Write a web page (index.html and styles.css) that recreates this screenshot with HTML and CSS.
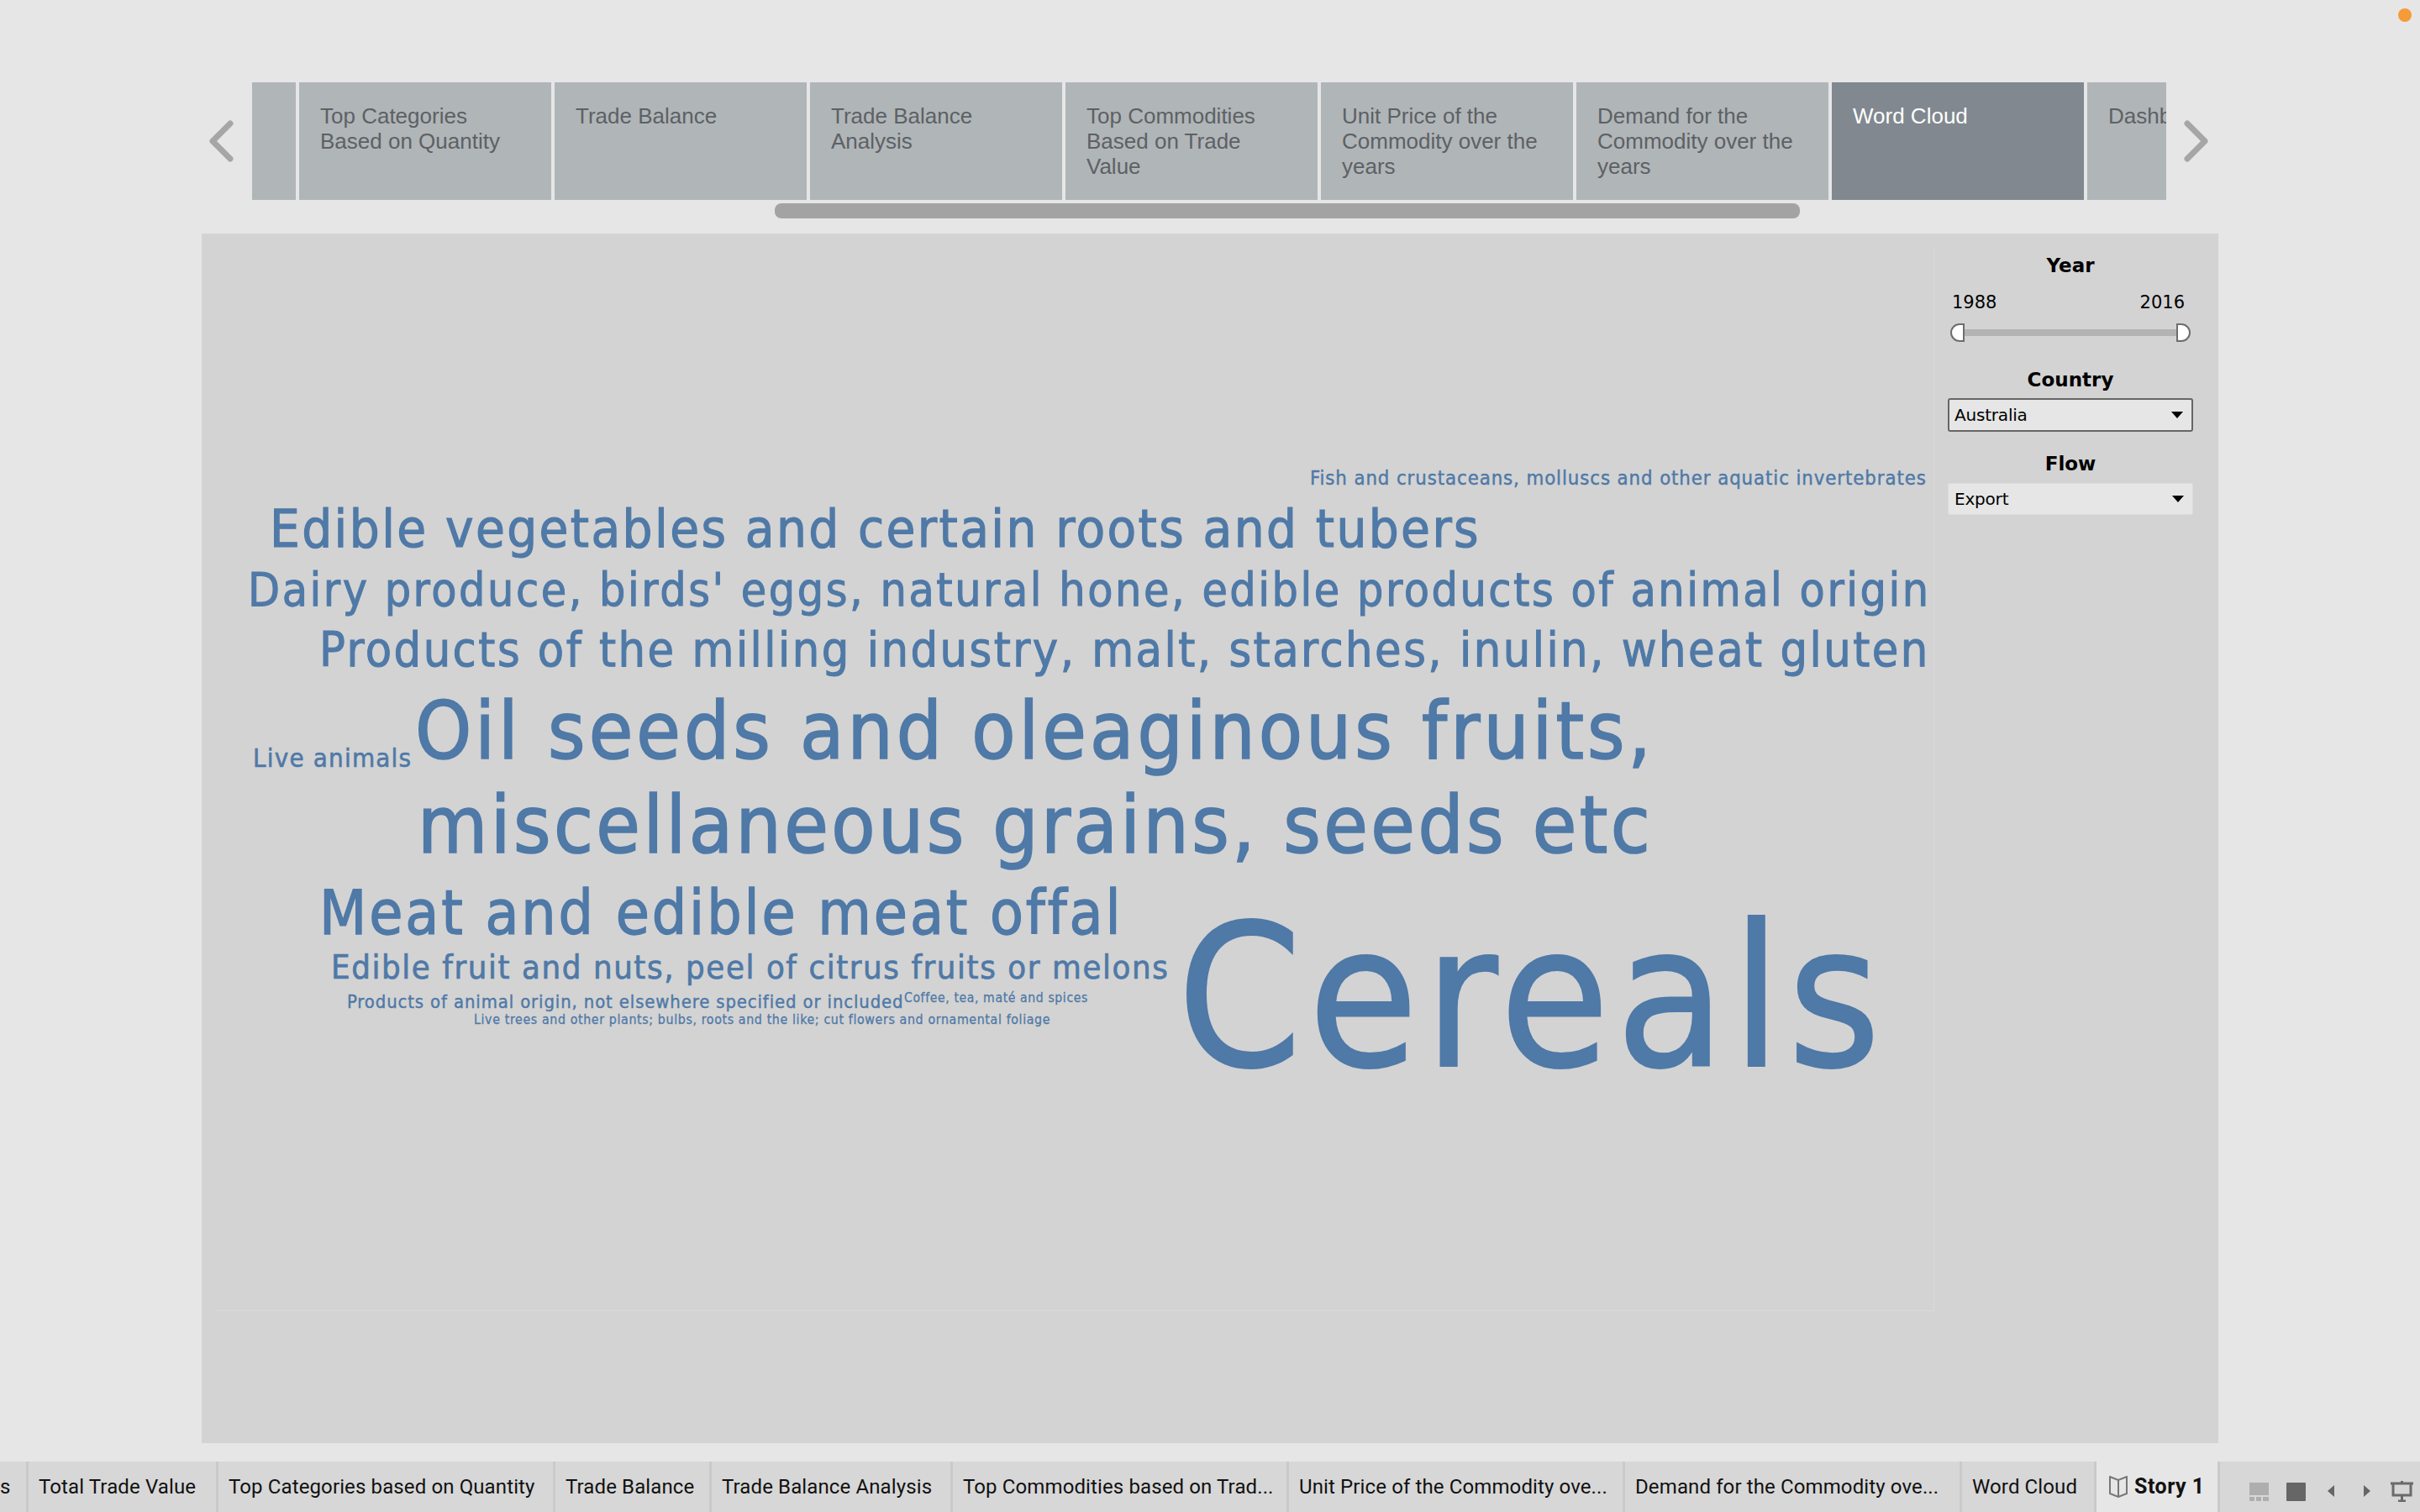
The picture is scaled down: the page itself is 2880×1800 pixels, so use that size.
FILE: index.html
```html
<!DOCTYPE html>
<html lang="en">
<head>
    <meta charset="UTF-8">
    <title>Word Cloud - Story 1</title>
    <link rel="stylesheet" href="styles.css">
</head>
<body>

    <span class="status-dot"></span>

    <!-- Story navigator -->
    <div class="story-nav">
        <svg class="nav-arrow" width="30" height="50" viewBox="0 0 30 50"><path d="M26 4 L5 25 L26 46" /></svg>
        <div class="story-points">
            <div class="point point-stub"></div>
            <div class="point">Top Categories Based on Quantity</div>
            <div class="point">Trade Balance</div>
            <div class="point">Trade Balance Analysis</div>
            <div class="point">Top Commodities Based on Trade Value</div>
            <div class="point">Unit Price of the Commodity over the years</div>
            <div class="point">Demand for the Commodity over the years</div>
            <div class="point point-active">Word Cloud</div>
            <div class="point point-cut">Dashboard</div>
        </div>
        <svg class="nav-arrow" width="30" height="50" viewBox="0 0 30 50"><path d="M4 4 L25 25 L4 46" /></svg>
    </div>
    <div class="scroll-track"><div class="scroll-thumb"></div></div>

    <!-- Dashboard panel -->
    <div class="panel">
        <div class="cloud">
            <span class="word w-fish">Fish and crustaceans, molluscs and other aquatic invertebrates</span>
            <span class="word w-veg">Edible vegetables and certain roots and tubers</span>
            <span class="word w-dairy">Dairy produce, birds' eggs, natural hone, edible products of animal origin</span>
            <span class="word w-milling">Products of the milling industry, malt, starches, inulin, wheat gluten</span>
            <span class="word w-live">Live animals</span>
            <span class="word w-oil">Oil seeds and oleaginous fruits,</span>
            <span class="word w-misc">miscellaneous grains, seeds etc</span>
            <span class="word w-meat">Meat and edible meat offal</span>
            <span class="word w-fruit">Edible fruit and nuts, peel of citrus fruits or melons</span>
            <span class="word w-origin">Products of animal origin, not elsewhere specified or included</span>
            <span class="word w-coffee">Coffee, tea, maté and spices</span>
            <span class="word w-trees">Live trees and other plants; bulbs, roots and the like; cut flowers and ornamental foliage</span>
            <span class="word w-cereals">Cereals</span>
        </div>
        <div class="filters">
            <div class="filter-title">Year</div>
            <div class="year-range"><span>1988</span><span>2016</span></div>
            <div class="slider">
                <span class="handle handle-left"></span>
                <span class="slider-track"></span>
                <span class="handle handle-right"></span>
            </div>
            <div class="filter-title title-country">Country</div>
            <div class="select select-focus">Australia<span class="caret"></span></div>
            <div class="filter-title title-flow">Flow</div>
            <div class="select">Export<span class="caret"></span></div>
        </div>
    </div>

    <!-- Sheet tabs -->
    <div class="sheet-bar">
        <div class="sheet sheet-cut">s</div>
        <div class="sheet">Total Trade Value</div>
        <div class="sheet">Top Categories based on Quantity</div>
        <div class="sheet">Trade Balance</div>
        <div class="sheet">Trade Balance Analysis</div>
        <div class="sheet">Top Commodities based on Trad...</div>
        <div class="sheet">Unit Price of the Commodity ove...</div>
        <div class="sheet">Demand for the Commodity ove...</div>
        <div class="sheet">Word Cloud</div>
        <div class="sheet sheet-active">
            <svg width="22" height="26" viewBox="0 0 22 26"><path d="M11 5 L1 1 V21 L11 25 L21 21 V1 Z M11 5 V25" /></svg>
            Story 1
        </div>
        <div class="sheet-tools">
            <svg class="tool tool-grid" width="23" height="22" viewBox="0 0 23 22"><rect width="23" height="15" /><rect y="17" width="6" height="5" /><rect x="8" y="17" width="6" height="5" /><rect x="16" y="17" width="7" height="5" /></svg>
            <svg class="tool tool-dark" width="23" height="22" viewBox="0 0 23 22"><rect width="23" height="22" rx="1" /></svg>
            <svg class="tool tool-dark tool-prev" width="8" height="14" viewBox="0 0 8 14"><path d="M8 0 V14 L0 7 Z" /></svg>
            <svg class="tool tool-dark tool-next" width="8" height="14" viewBox="0 0 8 14"><path d="M0 0 V14 L8 7 Z" /></svg>
            <svg class="tool-screen" width="27" height="25" viewBox="0 0 27 25"><path d="M0 3 H27 M3 3 V17 H24 V3 M13.5 0 V3 M13.5 17 V24 M9 24 H18" /></svg>
        </div>
    </div>

</body>
</html>
```
FILE: styles.css
```css
html, body {
    margin: 0;
    height: 100%;
}
body {
    width: 2880px;
    height: 1800px;
    overflow: hidden;
    position: relative;
    background-color: #e6e6e6;
    display: flex;
    flex-direction: column;
    font-family: "DejaVu Sans", sans-serif;
}
.status-dot {
    position: absolute;
    top: 10px;
    right: 10px;
    width: 16px;
    height: 16px;
    border-radius: 50%;
    background-color: #f59b38;
}

/* story navigator */
.story-nav {
    display: flex;
    align-items: center;
    margin: 98px 0 0 248px;
    height: 140px;
}
.nav-arrow {
    flex: none;
    fill: none;
    stroke: #a6a6a6;
    stroke-width: 7;
    stroke-linecap: round;
    stroke-linejoin: round;
}
.story-points {
    display: flex;
    gap: 4px;
    width: 2278px;
    height: 140px;
    margin: 0 21px 0 22px;
    overflow: hidden;
    font-family: "Liberation Sans", Arial, sans-serif;
    font-size: 26px;
    line-height: 30px;
    color: #5d6164;
}
.point {
    flex: none;
    box-sizing: border-box;
    width: 300px;
    padding: 25px 24px 0 25px;
    background-color: #b0b5b8;
}
.point-stub {
    width: 52px;
    padding: 0;
}
.point-active {
    background-color: #81888f;
    color: #fff;
}
.point-cut {
    width: 94px;
    padding-right: 0;
    white-space: nowrap;
    overflow: hidden;
}
.scroll-track {
    height: 18px;
    margin: 4px 0 18px;
}
.scroll-thumb {
    width: 1220px;
    height: 18px;
    margin-left: 922px;
    border-radius: 8px;
    background-color: #a3a3a3;
}

/* panel */
.panel {
    display: flex;
    width: 2400px;
    height: 1440px;
    margin-left: 240px;
    background-color: #d3d3d3;
}
.cloud {
    position: relative;
    flex: none;
    box-sizing: border-box;
    width: 2046px;
    height: 1267px;
    margin: 16px 0 0 16px;
    border-right: 1px solid #dadada;
    border-bottom: 1px solid #dadada;
    font-family: "DejaVu Sans Condensed", "DejaVu Sans", sans-serif;
    color: #4f79a7;
}
.word {
    position: absolute;
    white-space: nowrap;
    line-height: 1;
    -webkit-text-stroke: 0.018em #4f79a7;
}
/* cloud offsets are relative to the .cloud box at 256,294 */
.w-fish { left: 1303px; top: 264px; font-size: 23.7px; letter-spacing: 0.92px; }
.w-veg { left: 65px; top: 304px; font-size: 63px; letter-spacing: 2.4px; }
.w-dairy { left: 39px; top: 381px; font-size: 55px; letter-spacing: 2.53px; }
.w-milling { left: 124px; top: 451px; font-size: 57px; letter-spacing: 2.49px; }
.w-live { left: 45px; top: 593px; font-size: 31px; letter-spacing: 1.2px; }
.w-oil { left: 238px; top: 529px; font-size: 95px; letter-spacing: 4.05px; }
.w-misc { left: 241px; top: 641px; font-size: 95px; letter-spacing: 3.45px; }
.w-meat { left: 124px; top: 757px; font-size: 72.6px; letter-spacing: 2.9px; }
.w-fruit { left: 138px; top: 838px; font-size: 39.7px; letter-spacing: 1.6px; }
.w-origin { left: 157px; top: 888px; font-size: 21.9px; letter-spacing: 0.88px; }
.w-coffee { left: 820px; top: 887px; font-size: 15.6px; letter-spacing: 0.62px; }
.w-trees { left: 308px; top: 912px; font-size: 15.8px; letter-spacing: 0.63px; }
.w-cereals { left: 1145px; top: 776px; font-size: 236px; letter-spacing: 7.6px; -webkit-text-stroke: 0.008em #4f79a7; }

/* filters */
.filters {
    flex: none;
    display: flex;
    flex-direction: column;
    box-sizing: border-box;
    width: 292px;
    margin: 23px 0 0 16px;
    font-size: 21px;
    color: #000;
}
.filter-title {
    font-weight: bold;
    font-size: 23px;
    line-height: 30px;
    text-align: center;
}
.year-range {
    display: flex;
    justify-content: space-between;
    margin: 16px 10px 0 5px;
    line-height: 26px;
}
.slider {
    display: flex;
    align-items: center;
    height: 22px;
    margin: 12px 3px 0;
}
.slider-track {
    flex: 1;
    height: 8px;
    background-color: #b3b3b3;
}
.handle {
    box-sizing: border-box;
    width: 17px;
    height: 22px;
    background-color: #fff;
    border: 2px solid #6e6e6e;
}
.handle-left {
    border-radius: 11px 0 0 11px;
}
.handle-right {
    border-radius: 0 11px 11px 0;
}
.title-country {
    margin-top: 30px;
}
.title-flow {
    margin-top: 23px;
}
.select {
    position: relative;
    box-sizing: border-box;
    height: 38px;
    margin-top: 8px;
    padding-left: 7px;
    font-size: 20px;
    letter-spacing: -0.2px;
    line-height: 37px;
    background-color: #e6e6e6;
    border: 1px solid #dcdcdc;
    border-radius: 2px;
}
.select-focus {
    height: 40px;
    margin-top: 7px;
    border: 2px solid #666;
    border-radius: 3px;
    padding-left: 6px;
}
.caret {
    position: absolute;
    top: 14px;
    right: 10px;
    width: 0;
    height: 0;
    border-left: 7px solid transparent;
    border-right: 7px solid transparent;
    border-top: 8px solid #000;
}

/* sheet tabs */
.sheet-bar {
    display: grid;
    grid-template-columns: 34px 226px 401px 186px 287px 400px 400px 401px 160px 147px 1fr;
    height: 60px;
    margin-top: 22px;
    background-color: #d7d7d7;
    font-family: Roboto, sans-serif;
    font-size: 24px;
    letter-spacing: 0.12px;
    line-height: 60px;
    color: #111;
}
.sheet {
    box-sizing: border-box;
    padding-left: 12px;
    border-right: 3px solid #cacaca;
    white-space: nowrap;
    overflow: hidden;
}
.sheet-cut {
    padding-left: 0;
}
.sheet-active {
    display: flex;
    align-items: center;
    gap: 8px;
    padding-left: 15px;
    background-color: #e6e6e6;
    font-size: 25px;
    letter-spacing: 0.5px;
    font-weight: bold;
}
.sheet-active svg {
    fill: none;
    stroke: #777;
    stroke-width: 2;
}
.sheet-tools {
    position: relative;
    display: flex;
    align-items: flex-start;
    padding: 25px 0 0 35px;
}
.tool {
    flex: none;
}
.tool-grid {
    fill: #aeaeae;
}
.tool-dark {
    fill: #666;
    margin-left: 21px;
}
.tool-prev {
    margin: 3px 0 0 26px;
}
.tool-next {
    margin: 3px 0 0 35px;
}
.tool-screen {
    flex: none;
    margin: -2px 0 0 24px;
    fill: none;
    stroke: #6b6b6b;
    stroke-width: 3;
}
```
